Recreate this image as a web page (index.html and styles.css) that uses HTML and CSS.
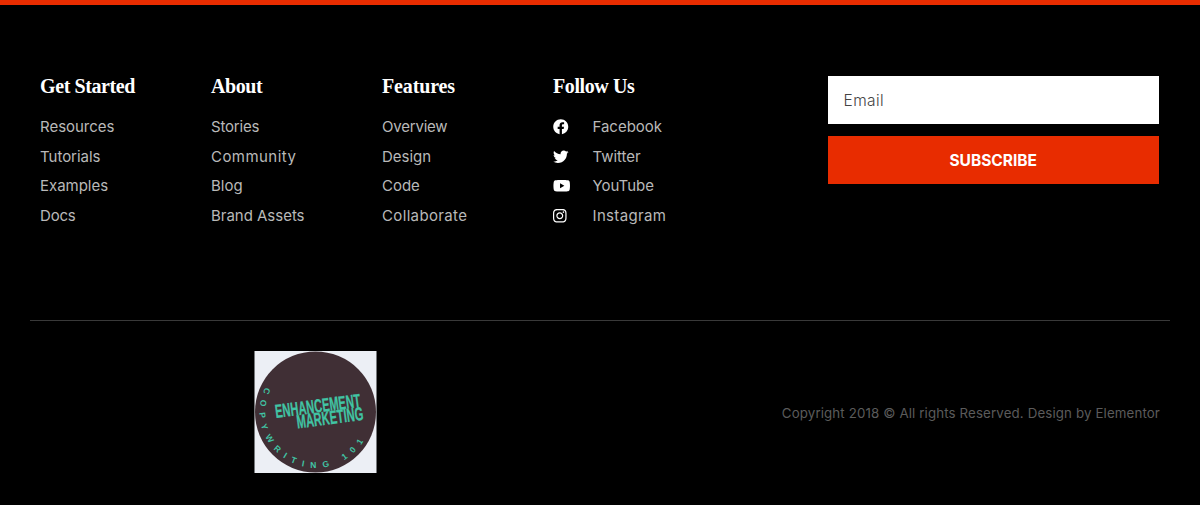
FILE: index.html
```html
<!DOCTYPE html>
<html lang="en">
<head>
<meta charset="utf-8">
<title>Footer</title>
<link rel="stylesheet" href="styles.css">
</head>
<body>
<footer class="footer">
  <div class="top">
    <nav class="col">
      <h4 class="heading">Get Started</h4>
      <ul class="links"><li>Resources</li><li>Tutorials</li><li>Examples</li><li class="snug">Docs</li></ul>
    </nav>
    <nav class="col">
      <h4 class="heading">About</h4>
      <ul class="links"><li class="snug">Stories</li><li class="wide">Community</li><li>Blog</li><li>Brand Assets</li></ul>
    </nav>
    <nav class="col">
      <h4 class="heading loose">Features</h4>
      <ul class="links"><li class="snug">Overview</li><li>Design</li><li>Code</li><li class="open">Collaborate</li></ul>
    </nav>
    <nav class="col social">
      <h4 class="heading">Follow Us</h4>
      <ul class="links">
        <li><span class="icon"><svg viewBox="0 0 512 512" height="15.5"><path d="M504 256C504 119 393 8 256 8S8 119 8 256c0 123.780 90.690 226.380 209.250 245V327.690h-63V256h63v-54.640c0-62.150 37-96.480 93.670-96.480 27.140 0 55.520 4.840 55.520 4.840v61h-31.280c-30.800 0-40.410 19.120-40.410 38.730V256h68.780l-11 71.690h-57.780V501C413.310 482.380 504 379.780 504 256z"/></svg></span>Facebook</li>
        <li><span class="icon"><svg viewBox="0 0 512 512" height="15.5"><path d="M459.370 151.716c.325 4.548.325 9.097.325 13.645 0 138.720-105.583 298.558-298.558 298.558-59.452 0-114.680-17.219-161.137-47.106 8.447.974 16.568 1.299 25.340 1.299 49.055 0 94.213-16.568 130.274-44.832-46.132-.975-84.792-31.188-98.112-72.772 6.498.974 12.995 1.624 19.818 1.624 9.421 0 18.843-1.300 27.614-3.573-48.081-9.747-84.143-51.980-84.143-102.985v-1.299c13.969 7.797 30.214 12.670 47.431 13.319-28.264-18.843-46.781-51.005-46.781-87.391 0-19.492 5.197-37.360 14.294-52.954 51.655 63.675 129.300 105.258 216.365 109.807-1.624-7.797-2.599-15.918-2.599-24.040 0-57.828 46.782-104.934 104.934-104.934 30.213 0 57.502 12.670 76.670 33.137 23.715-4.548 46.456-13.320 66.599-25.340-7.798 24.366-24.366 44.833-46.132 57.827 21.117-2.273 41.584-8.122 60.426-16.243-14.292 20.791-32.161 39.308-52.628 54.253z"/></svg></span>Twitter</li>
        <li><span class="icon"><svg viewBox="0 0 576 512" height="15.5"><path d="M549.655 124.083c-6.281-23.650-24.787-42.276-48.284-48.597C458.781 64 288 64 288 64S117.220 64 74.629 75.486c-23.497 6.322-42.003 24.947-48.284 48.597-11.412 42.867-11.412 132.305-11.412 132.305s0 89.438 11.412 132.305c6.281 23.650 24.787 41.500 48.284 47.821C117.220 448 288 448 288 448s170.780 0 213.371-11.486c23.497-6.321 42.003-24.171 48.284-47.821 11.412-42.867 11.412-132.305 11.412-132.305s0-89.438-11.412-132.305zm-317.510 213.508V175.185l142.739 81.205-142.739 81.201z"/></svg></span>YouTube</li>
        <li class="open"><span class="icon"><svg viewBox="0 0 448 512" height="15.5"><path d="M224.100 141c-63.600 0-114.900 51.300-114.900 114.900s51.300 114.900 114.900 114.900S339 319.500 339 255.900 287.700 141 224.100 141zm0 189.600c-41.100 0-74.700-33.500-74.700-74.700s33.500-74.700 74.700-74.700 74.700 33.500 74.700 74.700-33.600 74.700-74.700 74.700zm146.400-194.300c0 14.900-12 26.800-26.800 26.800-14.900 0-26.800-12-26.800-26.800s12-26.800 26.800-26.800 26.800 12 26.800 26.800zm76.100 27.200c-1.700-35.900-9.900-67.700-36.200-93.900-26.200-26.200-58-34.400-93.900-36.200-37-2.100-147.900-2.100-184.900 0-35.800 1.700-67.600 9.900-93.900 36.100s-34.400 58-36.200 93.900c-2.100 37-2.100 147.900 0 184.900 1.700 35.900 9.900 67.700 36.200 93.900s58 34.400 93.900 36.200c37 2.100 147.900 2.100 184.900 0 35.900-1.700 67.700-9.900 93.900-36.200 26.200-26.200 34.400-58 36.200-93.900 2.100-37 2.100-147.800 0-184.800zM398.800 388c-7.800 19.600-22.900 34.700-42.600 42.600-29.500 11.700-99.500 9-132.100 9s-102.700 2.600-132.100-9c-19.600-7.800-34.700-22.900-42.600-42.600-11.700-29.500-9-99.500-9-132.100s-2.600-102.700 9-132.100c7.800-19.600 22.900-34.700 42.600-42.600 29.500-11.700 99.500-9 132.100-9s102.700-2.600 132.100 9c19.600 7.800 34.700 22.900 42.600 42.600 11.700 29.500 9 99.500 9 132.100s2.700 102.700-9 132.100z"/></svg></span>Instagram</li>
      </ul>
    </nav>
    <form class="form">
      <input class="email" type="email" placeholder="Email">
      <button class="subscribe" type="button">SUBSCRIBE</button>
    </form>
  </div>
  <div class="bottom">
    <svg class="logo" viewBox="0 0 122 122">
      <defs><path id="ring" d="M10.700 36.500A56 56 0 0 0 110.700 86.900"/></defs>
      <rect width="122" height="122" fill="#eceff5"/>
      <circle cx="61" cy="61" r="60.500" fill="#402f35"/>
      <g class="logo-name">
        <text transform="translate(21.500 67) rotate(-7.500)" textLength="86" lengthAdjust="spacingAndGlyphs">ENHANCEMENT</text>
        <text transform="translate(43 77.500) rotate(-7.500)" textLength="67" lengthAdjust="spacingAndGlyphs">MARKETING</text>
      </g>
      <text class="logo-ring"><textPath href="#ring">COPYWRITING 101</textPath></text>
    </svg>
    <p class="copy">Copyright 2018 © All rights Reserved. Design by Elementor</p>
  </div>
</footer>
</body>
</html>
```
FILE: styles.css
```css
* { box-sizing: border-box; }
body {
  margin: 0;
  background: #000;
  font-family: Inter, "Liberation Sans", sans-serif;
}
.footer {
  height: 505px;
  border-top: 5px solid #e82c00;
  padding: 0 30px;
}
.top {
  display: flex;
  height: 316px;
  padding: 71px 11px 0 10px;
  border-bottom: 1px solid #393939;
}
.col { width: 171px; }
.social { width: 274.5px; }
.heading {
  margin: 0;
  font: bold 20px/20px "Liberation Serif", serif;
  letter-spacing: -0.4px;
  color: #fff;
}
.loose { letter-spacing: -0.15px; }
.links {
  list-style: none;
  margin: 16px 0 0;
  padding: 0;
  font-size: 15px;
  line-height: 29.5px;
  letter-spacing: -0.02px;
  color: #b9b9b9;
}
.links li { display: flex; height: 29.5px; }
.links .snug { letter-spacing: -0.2px; }
.links .open { letter-spacing: 0.35px; }
.links .wide { letter-spacing: 0.45px; }
.icon { width: 39.5px; display: flex; align-items: center; }
.icon svg { fill: #fff; }
.form {
  flex: 1;
  display: flex;
  flex-direction: column;
  gap: 12px;
}
.email, .subscribe {
  height: 48px;
  border: 0;
  border-radius: 0;
  font-family: inherit;
}
.email { padding: 0 16px; background: #fff; font-size: 15.5px; letter-spacing: 0.4px; }
.email::placeholder { color: #444; opacity: 1; font-weight: 300; }
.subscribe { background: #e82c00; color: #fff; font-size: 15.5px; font-weight: 700; }
.bottom {
  display: flex;
  justify-content: space-between;
  align-items: center;
  padding: 30px 10px 0 224px;
}
.logo { width: 123px; height: 122px; }
.logo-name {
  fill: #41c4a4;
  stroke: #41c4a4;
  stroke-width: 0.3px;
  font: bold 19px "Liberation Sans", sans-serif;
}
.logo-ring { fill: #41c4a4; font: bold 8.5px "Liberation Sans", sans-serif; letter-spacing: 6.6px; }
.copy { margin: 1px 0 0; font-size: 13.3px; letter-spacing: 0.13px; color: #5b5b5b; }
```
